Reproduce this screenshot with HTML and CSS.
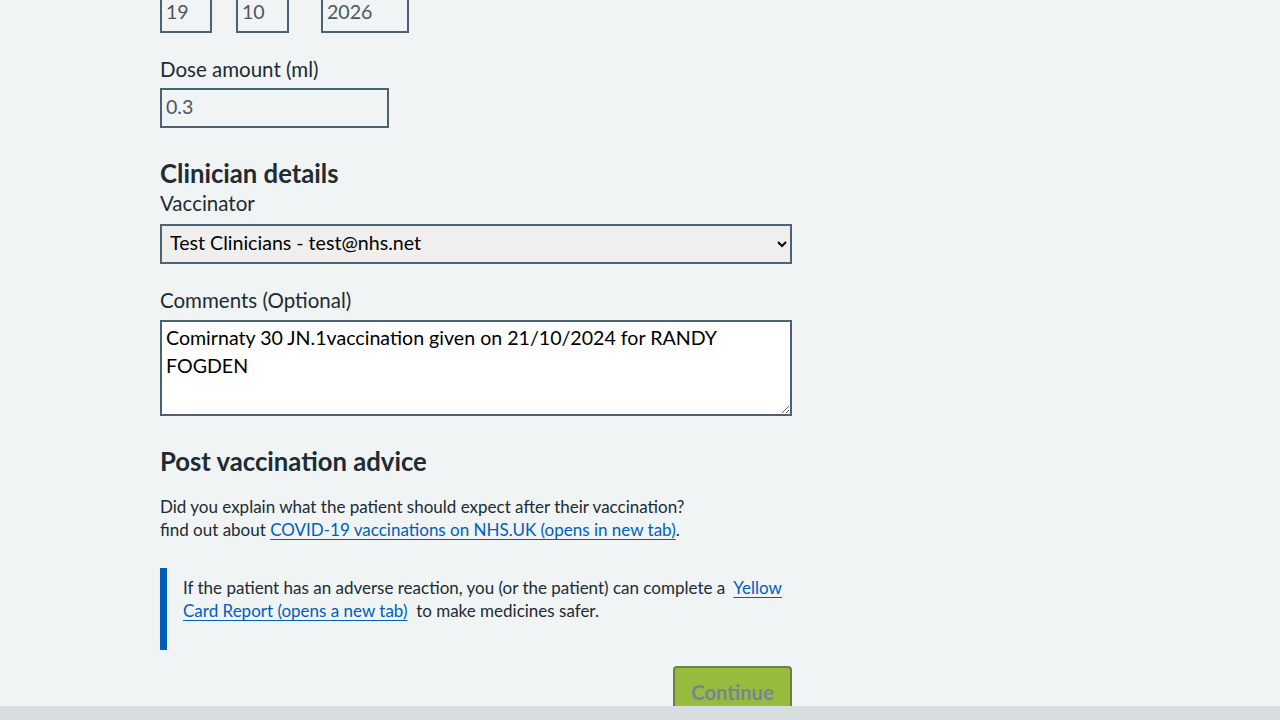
FILE: index.html
```html
<!DOCTYPE html>
<html lang="en">
<head>
<meta charset="utf-8">
<title>Record vaccination</title>
<link rel="stylesheet" href="styles.css">
</head>
<body>
<main class="page">
  <div class="form">
    <div class="date-group">
      <div class="date-item date-day">
        <label class="date-label" for="d">Day</label>
        <input class="input input-day" id="d" type="text" value="19">
      </div>
      <div class="date-item date-month">
        <label class="date-label" for="m">Month</label>
        <input class="input input-month" id="m" type="text" value="10">
      </div>
      <div class="date-item date-year">
        <label class="date-label" for="y">Year</label>
        <input class="input input-year" id="y" type="text" value="2026">
      </div>
    </div>

    <div class="field field-dose">
      <label class="label" for="dose">Dose amount (ml)</label>
      <input class="input input-dose" id="dose" type="text" value="0.3">
    </div>

    <h2 class="heading heading-clinician">Clinician details</h2>
    <div class="field field-vacc">
      <label class="label" for="vacc">Vaccinator</label>
      <select class="select" id="vacc">
        <option>Test Clinicians - test@nhs.net</option>
      </select>
    </div>

    <div class="field field-comments">
      <label class="label" for="comments">Comments (Optional)</label>
      <textarea class="textarea" id="comments" rows="3">Comirnaty 30 JN.1vaccination given on 21/10/2024 for RANDY FOGDEN</textarea>
    </div>

    <h2 class="heading heading-advice">Post vaccination advice</h2>
    <p class="body-text">Did you explain what the patient should expect after their vaccination?<br>find out about <a class="link" href="#">COVID-19 vaccinations on NHS.UK (opens in new tab)</a>.</p>

    <div class="inset">
      <p class="inset-text">If the patient has an adverse reaction, you (or the patient) can complete a &nbsp;<a class="link" href="#">Yellow Card Report (opens a new tab)</a> &nbsp;to make medicines safer.</p>
    </div>

    <div class="actions">
      <button class="button" type="button" disabled>Continue</button>
    </div>
  </div>
</main>
<footer class="footer"></footer>
</body>
</html>
```

FILE: styles.css
```css
html, body {
  margin: 0;
  padding: 0;
}
body {
  background: #f0f4f5;
  color: #212b32;
  font-family: Lato, "Liberation Sans", sans-serif;
  height: 720px;
  overflow: hidden;
  position: relative;
}
.page {
  padding-left: 160px;
}
.form {
  width: 632px;
  margin-top: -37px;
}
.date-group {
  display: flex;
}
.date-item {
  display: flex;
  flex-direction: column;
  align-items: flex-start;
}
.date-day { margin-right: 24px; }
.date-month { margin-right: 32px; }
.date-label {
  display: block;
  width: 0;
  white-space: nowrap;
  font-size: 20.5px;
  line-height: 25px;
  height: 25px;
  margin-bottom: 5px;
}
.input {
  box-sizing: border-box;
  height: 40px;
  border: 2px solid #4c6272;
  background: #f0f4f5;
  color: #4d5760;
  font-family: inherit;
  font-size: 19.6px;
  padding: 0 4px 4px;
  margin: 0;
  border-radius: 0;
  outline: none;
}
.input-day { width: 52px; }
.input-month { width: 53px; }
.input-year { width: 88px; }
.input-dose { width: 229px; }

.field {
  display: flex;
  flex-direction: column;
  align-items: flex-start;
}
.label {
  font-size: 20.5px;
  line-height: 25px;
  margin-bottom: 6px;
}
.field-dose { margin-top: 24px; }

.heading {
  font-size: 25.7px;
  line-height: 30px;
  font-weight: 700;
  margin: 0;
}
.heading-clinician { margin-top: 30px; }
.field-vacc { margin-top: 3px; }
.label + .select { margin-top: 2px; }
.label + .textarea { margin-top: 1px; }

.select {
  box-sizing: border-box;
  width: 632px;
  height: 40px;
  border: 2px solid #4c6272;
  background-color: #f0efee;
  color: #000;
  font-family: inherit;
  font-size: 19.6px;
  padding: 0 4px 3px;
  border-radius: 0;
  margin: 0;
}
.field-comments { margin-top: 24px; }
.textarea {
  box-sizing: border-box;
  width: 632px;
  height: 96px;
  border: 2px solid #4c6272;
  background: #ffffff;
  color: #000;
  font-family: inherit;
  font-size: 19.6px;
  line-height: 28px;
  padding: 2px 4px;
  margin: 0;
  border-radius: 0;
  resize: vertical;
}
.heading-advice { margin-top: 30px; }
.body-text {
  font-size: 17px;
  line-height: 23px;
  margin: 19px 0 0;
}
.link {
  color: #005eb8;
  text-decoration: underline;
  text-underline-offset: 3px;
}
.inset {
  margin-top: 27px;
  border-left: 7px solid #005eb8;
  padding: 8px 0 28px 16px;
}
.inset-text {
  font-size: 17px;
  line-height: 23px;
  margin: 0;
}
.actions {
  display: flex;
  justify-content: flex-end;
  margin-top: 16px;
}
.button {
  box-sizing: border-box;
  width: 119px;
  height: 52px;
  background: #97bb3c;
  border: 2px solid #6b8049;
  border-radius: 4px;
  color: #768692;
  font-family: inherit;
  font-size: 20.2px;
  font-weight: 700;
  padding: 12px 0 0;
  display: flex;
  justify-content: center;
  align-items: flex-start;
}
.footer {
  position: absolute;
  left: 0;
  right: 0;
  bottom: 0;
  height: 14px;
  background: #d8dde0;
}
```
